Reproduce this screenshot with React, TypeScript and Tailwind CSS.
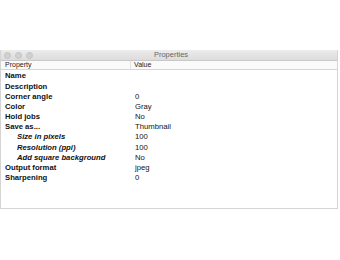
import React from "react";

const rows: { k: string; v: string; sub?: boolean }[] = [
  { k: "Name", v: "" },
  { k: "Description", v: "" },
  { k: "Corner angle", v: "0" },
  { k: "Color", v: "Gray" },
  { k: "Hold jobs", v: "No" },
  { k: "Save as...", v: "Thumbnail" },
  { k: "Size in pixels", v: "100", sub: true },
  { k: "Resolution (ppi)", v: "100", sub: true },
  { k: "Add square background", v: "No", sub: true },
  { k: "Output format", v: "jpeg" },
  { k: "Sharpening", v: "0" },
];

export default function App() {
  return (
    <div className="w-[340px] h-[260px] bg-white pt-[50px]" style={{ fontFamily: "'Liberation Sans', Arial, sans-serif" }}>
      <div className="w-[338px] h-[159px] border border-[#d4d4d4] border-t-0 flex flex-col bg-white">
        <div className="h-[11px] bg-gradient-to-b from-[#ececec] to-[#dcdcdc] border-b border-[#c8c8c8] flex items-center relative">
          <div className="flex gap-[4px] pl-[3px]">
            <div className="w-[7px] h-[7px] rounded-full bg-[#d0d0d0] border border-[#c4c4c4]" />
            <div className="w-[7px] h-[7px] rounded-full bg-[#d0d0d0] border border-[#c4c4c4]" />
            <div className="w-[7px] h-[7px] rounded-full bg-[#d0d0d0] border border-[#c4c4c4]" />
          </div>
          <div className="absolute inset-0 flex items-center justify-center text-[7.5px] text-[#666] pl-[4px]">Properties</div>
        </div>
        <div className="h-[9px] flex items-center text-[7px] text-[#222] bg-[#fafafa] border-b border-[#d6d6d6]">
          <div className="w-[130px] pl-[4px] border-r border-[#e2e2e2] h-full flex items-center">Property</div>
          <div className="pl-[3px]">Value</div>
        </div>
        <div className="flex flex-col pt-[1px]">
          {rows.map((r) => (
            <div key={r.k} className="h-[10.2px] flex items-center text-[7.7px] text-[#111]">
              <div className={`w-[130px] font-bold ${r.sub ? "pl-[16px] italic" : "pl-[4px]"}`}>{r.k}</div>
              <div className="pl-[4px]">{r.v}</div>
            </div>
          ))}
        </div>
      </div>
    </div>
  );
}
